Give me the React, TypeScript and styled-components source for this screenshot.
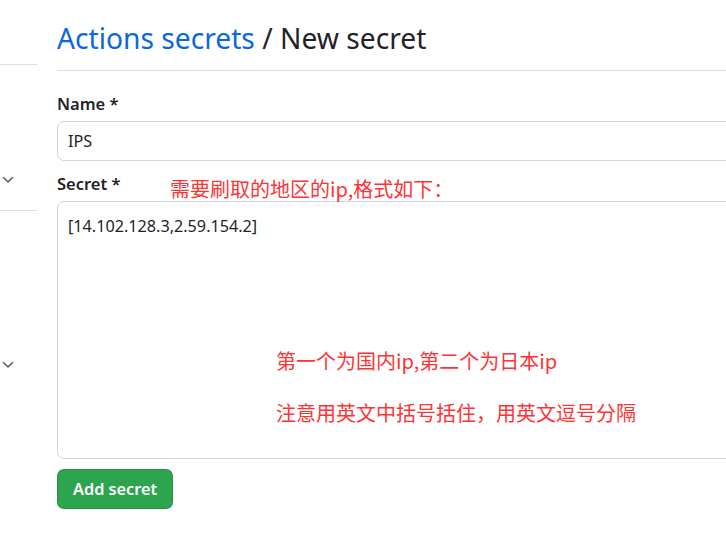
import React from "react";
import styled, { createGlobalStyle } from "styled-components";

const GlobalStyle = createGlobalStyle`
    html, body {
        margin: 0;
        padding: 0;
        background: #fff;
        overflow: hidden;
    }
    body {
        font-family: "Noto Sans", "Open Sans", "Noto Sans CJK SC", sans-serif;
        color: #1f2328;
    }
`;

const Page = styled.div`
    display: flex;
    width: 726px;
    height: 550px;
    overflow: hidden;
`;

const Sidebar = styled.aside`
    width: 37px;
    flex-shrink: 0;
    display: flex;
    flex-direction: column;
`;

const SideSection = styled.div<{ h: number; bordered?: boolean }>`
    height: ${({ h }) => h}px;
    border-bottom: ${({ bordered }) => (bordered ? "1px solid #d8dee4" : "none")};
    display: flex;
    align-items: flex-end;
    padding-left: 2px;
`;

const ChevronWrap = styled.span<{ pb: number }>`
    display: flex;
    padding-bottom: ${({ pb }) => pb}px;
    color: #57606a;
`;

const Chevron = ({ pb }: { pb: number }) => (
    <ChevronWrap pb={pb}>
        <svg width="12" height="8" viewBox="0 0 12 8" fill="none">
            <path d="M1.5 1.5 L6 6 L10.5 1.5" stroke="currentColor" strokeWidth="1.6" strokeLinecap="round" strokeLinejoin="round" />
        </svg>
    </ChevronWrap>
);

const Main = styled.main`
    position: relative;
    margin-left: 20px;
    width: 760px;
    flex-shrink: 0;
    padding-top: 19px;
`;

const Title = styled.h2`
    margin: 0;
    font-weight: 400;
    font-size: 28.2px;
    line-height: 38px;
    padding-bottom: 13px;
    border-bottom: 1px solid #d8dee4;
    color: #1f2328;
`;

const TitleLink = styled.a`
    color: #0969da;
    text-decoration: none;
`;

const Form = styled.form`
    display: flex;
    flex-direction: column;
    padding-top: 21px;
`;

const Label = styled.label`
    font-size: 16.5px;
    font-weight: 600;
    line-height: 24px;
    margin-bottom: 5px;
`;

const Field = styled.div`
    display: flex;
    flex-direction: column;
    margin-bottom: 11px;
`;

const Input = styled.div`
    box-sizing: border-box;
    height: 40px;
    border: 1px solid #d0d7de;
    border-radius: 7px;
    padding: 0 10px;
    display: flex;
    align-items: center;
    font-size: 16.2px;
    color: #1f2328;
`;

const TextArea = styled.div`
    box-sizing: border-box;
    height: 258px;
    border: 1px solid #d0d7de;
    border-radius: 7px;
    padding: 12px 10px;
    font-size: 16.2px;
    line-height: 24px;
    color: #1f2328;
`;

const Button = styled.button`
    align-self: flex-start;
    box-sizing: border-box;
    height: 40px;
    margin-top: -1px;
    padding: 0 15px;
    background: #2da44e;
    border: 1px solid rgba(27, 31, 36, 0.15);
    border-radius: 7px;
    color: #fff;
    font-family: inherit;
    font-size: 16.3px;
    font-weight: 600;
`;

const Note = styled.span<{ top: number; left: number }>`
    position: absolute;
    top: ${({ top }) => top}px;
    left: ${({ left }) => left}px;
    color: #ff3333;
    font-family: "Noto Sans CJK SC", sans-serif;
    font-size: 20px;
    line-height: 26px;
    white-space: nowrap;
`;

export default function App() {
    return (
        <Page>
            <GlobalStyle />
            <Sidebar>
                <SideSection h={64} bordered />
                <SideSection h={145} bordered>
                    <Chevron pb={26} />
                </SideSection>
                <SideSection h={160}>
                    <Chevron pb={2} />
                </SideSection>
            </Sidebar>
            <Main>
                <Title>
                    <TitleLink href="#">Actions secrets</TitleLink> / New secret
                </Title>
                <Form>
                    <Field>
                        <Label>Name *</Label>
                        <Input>IPS</Input>
                    </Field>
                    <Field>
                        <Label>Secret *</Label>
                        <TextArea>[14.102.128.3,2.59.154.2]</TextArea>
                    </Field>
                    <Button type="button">Add secret</Button>
                </Form>
                <Note top={176} left={113}>需要刷取的地区的ip,格式如下：</Note>
                <Note top={348} left={219}>第一个为国内ip,第二个为日本ip</Note>
                <Note top={400} left={219}>注意用英文中括号括住，用英文逗号分隔</Note>
            </Main>
        </Page>
    );
}
